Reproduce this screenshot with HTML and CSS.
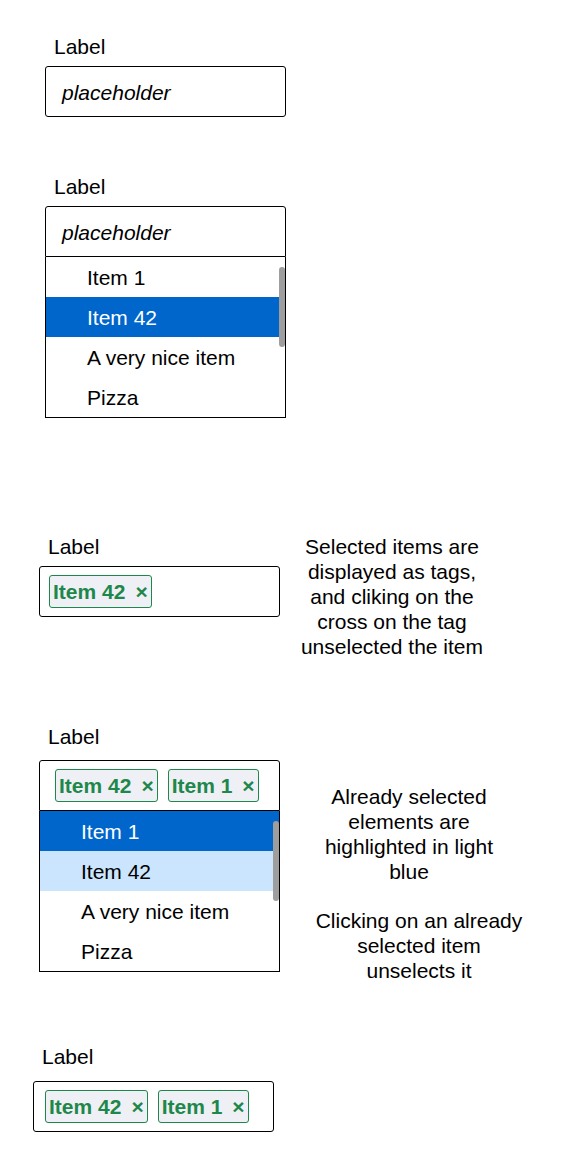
FILE: index.html
```html
<!DOCTYPE html>
<html lang="en">
<head>
  <meta charset="UTF-8">
  <meta name="viewport" content="width=device-width, initial-scale=1">
  <title>Multi select</title>
  <link rel="stylesheet" href="styles.css">
</head>
<body>

  <div class="page">

    <!-- Empty -->
    <section class="demo demo-empty">
      <div class="field">
        <div class="field-label">Label</div>
        <div class="input"><span class="placeholder">placeholder</span></div>
      </div>
    </section>

    <!-- Open, nothing selected -->
    <section class="demo demo-open">
      <div class="field">
        <div class="field-label">Label</div>
        <div class="input open"><span class="placeholder">placeholder</span></div>
        <div class="menu">
          <div class="option">Item 1</div>
          <div class="option active">Item 42</div>
          <div class="option">A very nice item</div>
          <div class="option">Pizza</div>
          <div class="scroll-thumb"></div>
        </div>
      </div>
    </section>

    <!-- One tag -->
    <section class="demo demo-tag">
      <div class="field">
        <div class="field-label">Label</div>
        <div class="input tags">
          <span class="tag">Item 42<span class="tag-x">×</span></span>
        </div>
      </div>
      <div class="notes">
        <p class="note">Selected items are displayed as tags, and cliking on the cross on the tag unselected the item</p>
      </div>
    </section>

    <!-- Open with tags -->
    <section class="demo demo-open-tags">
      <div class="field">
        <div class="field-label">Label</div>
        <div class="input tags open">
          <span class="tag">Item 42<span class="tag-x">×</span></span>
          <span class="tag">Item 1<span class="tag-x">×</span></span>
        </div>
        <div class="menu">
          <div class="option active">Item 1</div>
          <div class="option selected">Item 42</div>
          <div class="option">A very nice item</div>
          <div class="option">Pizza</div>
          <div class="scroll-thumb"></div>
        </div>
      </div>
      <div class="notes">
        <p class="note">Already selected elements are highlighted in light blue</p>
        <p class="note note-second">Clicking on an already selected item unselects it</p>
      </div>
    </section>

    <!-- Two tags -->
    <section class="demo demo-two-tags">
      <div class="field">
        <div class="field-label">Label</div>
        <div class="input tags">
          <span class="tag">Item 42<span class="tag-x">×</span></span>
          <span class="tag">Item 1<span class="tag-x">×</span></span>
        </div>
      </div>
    </section>

  </div>

</body>
</html>
```

FILE: styles.css
```css
* {
  box-sizing: border-box;
}
body {
  margin: 0;
  font-family: "Liberation Sans", Arial, sans-serif;
  font-size: 21px;
  line-height: 25px;
  color: #000;
  background: #fff;
}
.page {
  padding-top: 34px;
}

/* SECTIONS */
.demo {
  display: flex;
  align-items: flex-start;
}
.demo-empty .field { margin-left: 45px; }
.demo-open { margin-top: 57px; }
.demo-open .field { margin-left: 45px; }
.demo-tag { margin-top: 116px; }
.demo-tag .field { margin-left: 39px; }
.demo-open-tags { margin-top: 65px; }
.demo-open-tags .field { margin-left: 39px; }
.demo-open-tags .field-label { margin-bottom: 11px; }
.demo-two-tags { margin-top: 61px; }
.demo-two-tags .field { margin-left: 33px; }
.demo-two-tags .field-label { margin-bottom: 12px; }

/* FIELD */
.field {
  width: 241px;
  flex: none;
}
.field-label {
  padding-left: 9px;
  margin-bottom: 7px;
}
.input {
  height: 51px;
  border: 1px solid #000;
  border-radius: 3px;
  display: flex;
  align-items: center;
  padding: 1px 0 0 16px;
}
.input.open {
  border-radius: 3px 3px 0 0;
}
.placeholder {
  font-style: italic;
}

/* TAGS */
.input.tags {
  padding: 0 0 0 9px;
  gap: 10px;
}
.demo-open-tags .input.tags { padding-left: 15px; }
.demo-two-tags .input.tags { padding-left: 11px; }
.tag {
  display: flex;
  align-items: center;
  height: 33px;
  padding: 3px;
  border: 1px solid #1e874b;
  border-radius: 3px;
  background: #eff0f5;
  color: #1e874b;
  font-weight: bold;
}
.tag-x {
  margin-left: 10px;
}

/* DROPDOWN */
.menu {
  position: relative;
  border: 1px solid #000;
  border-top: none;
}
.option {
  height: 40px;
  padding-left: 41px;
  display: flex;
  align-items: center;
}
.option.active {
  background: #0066cc;
  color: #fff;
}
.option.selected {
  background: #cce5ff;
}
.scroll-thumb {
  position: absolute;
  top: 10px;
  right: 0;
  width: 6px;
  height: 80px;
  border-radius: 3px;
  background: #9e9e9e;
}

/* NOTES */
.notes {
  flex: none;
}
.note {
  margin: 0;
  text-align: center;
}
.demo-tag .notes {
  margin-left: 17px;
}
.demo-tag .note {
  width: 190px;
}
.demo-open-tags .notes {
  margin: 60px 0 0 0;
}
.demo-open-tags .note {
  width: 176px;
  margin-left: 41px;
}
.demo-open-tags .note-second {
  width: 212px;
  margin: 24px 0 0 33px;
}
```
